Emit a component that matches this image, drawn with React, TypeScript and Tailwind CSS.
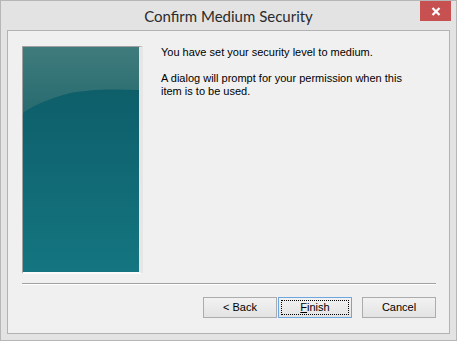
import React from "react";

function Btn({ children, focused, w }: { children: React.ReactNode; focused?: boolean; w: string }) {
  return (
    <div
      className={
        "h-[21px] flex items-center justify-center border bg-gradient-to-b from-[#f2f2f2] to-[#e3e3e3] text-[11px] text-black " +
        w +
        (focused ? " border-[#6ea6e0] from-[#eaf4fc] to-[#dcecfc]" : " border-[#acacac]")
      }
      style={{ fontFamily: '"Liberation Sans", Arial, sans-serif' }}
    >
      {focused ? (
        <div className="w-full h-full p-[2px]">
          <div className="w-full h-full border border-dotted border-black flex items-center justify-center leading-none">
            {children}
          </div>
        </div>
      ) : (
        <span className="leading-none">{children}</span>
      )}
    </div>
  );
}

export default function App() {
  return (
    <div className="w-[457px] h-[341px] border border-[#b6b6b6] bg-[#e3e3e3] flex flex-col px-[6px] pb-[6px] overflow-hidden">
      <div className="h-[29px] relative flex items-center justify-center shrink-0">
        <span
          className="text-[15px] text-[#2b2b2b] mt-[1px]"
          style={{ fontFamily: 'Lato, "Open Sans", sans-serif' }}
        >
          Confirm Medium Security
        </span>
        <div className="absolute right-[-1px] top-0 w-[31px] h-[20px] bg-[#c75050] flex items-center justify-center">
          <svg width="10" height="9" viewBox="0 0 10 9">
            <path d="M1.5 1 L8.5 8 M8.5 1 L1.5 8" stroke="white" strokeWidth="2.2" />
          </svg>
        </div>
      </div>
      <div className="flex-1 border border-[#b2b2b2] bg-[#f0f0f0] flex flex-col pl-[14px] pr-[13px] pt-[15px]">
        <div className="flex">
          <div className="w-[121px] h-[228px] border-t border-l border-[#a0a0a0] border-r-[4px] border-r-[#e6e6e6] border-b-[2px] border-b-[#fbfbfb] shrink-0 overflow-hidden">
            <svg width="116" height="225" viewBox="0 0 116 225" preserveAspectRatio="none" className="block">
              <defs>
                <linearGradient id="bg" x1="0" y1="0" x2="0" y2="1">
                  <stop offset="0" stopColor="#0c5a63" />
                  <stop offset="0.4" stopColor="#0f6470" />
                  <stop offset="1" stopColor="#147680" />
                </linearGradient>
                <linearGradient id="hl" x1="0" y1="0" x2="0" y2="1">
                  <stop offset="0" stopColor="#3f7b7c" />
                  <stop offset="1" stopColor="#276b70" />
                </linearGradient>
              </defs>
              <rect width="116" height="225" fill="url(#bg)" />
              <path d="M0 0 H116 V43 C90 42 60 42 40 48 C20 54 8 60 0 66 Z" fill="url(#hl)" />
            </svg>
          </div>
          <div
            className="ml-[18px] text-[11px] leading-[13px] text-black"
            style={{ fontFamily: '"Liberation Sans", Arial, sans-serif' }}
          >
            <p>You have set your security level to medium.</p>
            <p className="mt-[13px] w-[262px]">A dialog will prompt for your permission when this item is to be used.</p>
          </div>
        </div>
        <div className="mt-[9px] h-[2px] border-t border-[#a0a0a0] border-b border-b-white" />
        <div className="mt-[12px] flex justify-end">
          <Btn w="w-[74px]">&lt; Back</Btn>
          <div className="w-[1px]" />
          <Btn w="w-[74px]" focused>
            <span>
              <span className="underline">F</span>inish
            </span>
          </Btn>
          <div className="w-[10px]" />
          <Btn w="w-[74px]">Cancel</Btn>
        </div>
      </div>
    </div>
  );
}
